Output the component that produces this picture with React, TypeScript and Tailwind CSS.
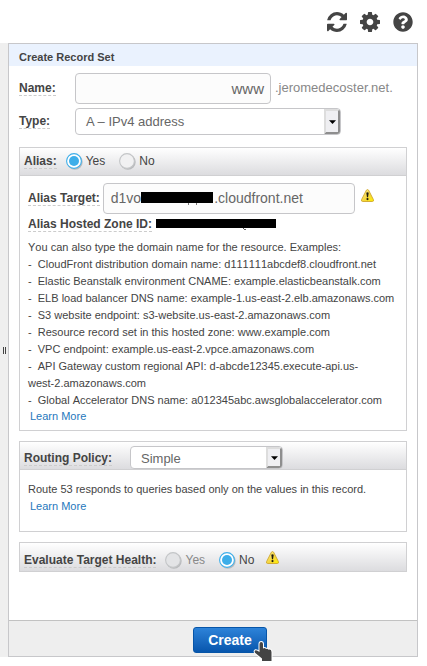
import type { ReactNode } from "react";
import { FaQuestionCircle } from "react-icons/fa";

const examples: ReactNode[] = [
  "CloudFront distribution domain name: d111111abcdef8.cloudfront.net",
  "Elastic Beanstalk environment CNAME: example.elasticbeanstalk.com",
  "ELB load balancer DNS name: example-1.us-east-2.elb.amazonaws.com",
  "S3 website endpoint: s3-website.us-east-2.amazonaws.com",
  "Resource record set in this hosted zone: www.example.com",
  "VPC endpoint: example.us-east-2.vpce.amazonaws.com",
  <>API Gateway custom regional API: d-abcde12345.execute-api.us-<br />west-2.amazonaws.com</>,
  "Global Accelerator DNS name: a012345abc.awsglobalaccelerator.com",
];

function Label({ children }: { children: ReactNode }) {
  return (
    <span className="h-[15px] shrink-0 border-b border-dashed border-[#ccc] text-xs leading-[14px] font-bold whitespace-nowrap text-[#444]">
      {children}
    </span>
  );
}

function RefreshIcon() {
  return (
    <svg width="20" height="20" viewBox="0 0 1536 1536" fill="currentColor">
      <path transform="matrix(1 0 0 -1 0 1536)" d="M1511 608q0-5-1-7q-64-268-268-434.500t-478-166.500q-146 0-282.500 55t-243.500 157l-129-129q-19-19-45-19t-45 19t-19 45v448q0 26 19 45t45 19h448q26 0 45-19t19-45t-19-45l-137-137q71-66 161-102t187-36q134 0 250 65t186 179q11 17 53 117q8 23 30 23h192q13 0 22.500-9.500t9.500-22.500zM1536 1408v-448q0-26-19-45t-45-19h-448q-26 0-45 19t-19 45t19 45l138 138q-148 137-349 137q-134 0-250-65t-186-179q-11-17-53-117q-8-23-30-23h-199q-13 0-22.500 9.500t-9.500 22.500v7q65 268 270 434.500t480 166.500q146 0 284-55.500t245-156.500l130 129q19 19 45 19t45-19t19-45z" />
    </svg>
  );
}

function GearIcon() {
  return (
    <svg width="20" height="20" viewBox="0 0 1536 1536" fill="currentColor" fillRule="evenodd">
      <path d="M1024 768q0 106-75 181t-181 75t-181-75t-75-181t75-181t181-75t181 75t75 181zM1536 659v222q0 12-8 23t-20 13l-185 28q-19 54-39 91q35 50 107 138q10 12 10 25t-9 23q-27 37-99 108t-94 71q-12 0-26-9l-138-108q-44 23-91 38q-16 136-29 186q-7 28-36 28h-222q-14 0-24.500-8.500t-11.500-21.500l-28-184q-49-16-90-37l-141 107q-10 9-25 9q-14 0-25-11q-126-114-165-168q-7-10-7-23q0-12 8-23q15-21 51-66.500t54-70.500q-27-50-41-99l-183-27q-13-2-21-12.500t-8-23.500v-222q0-12 8-23t19-13l186-28q14-46 39-92q-40-57-107-138q-10-12-10-24q0-10 9-23q26-36 98.500-107.500t94.500-71.500q13 0 26 10l138 107q44-23 91-38q16-136 29-186q7-28 36-28h222q14 0 24.500 8.500t11.500 21.500l28 184q49 16 90 37l142-107q9-9 24-9q13 0 25 10q129 119 165 170q7 8 7 22q0 12-8 23q-15 21-51 66.500t-54 70.500q26 50 41 98l183 28q13 2 21 12.500t8 23.500z" />
    </svg>
  );
}

function Warning() {
  return (
    <svg width="13" height="13" viewBox="0 0 13 13" className="shrink-0">
      <defs>
        <linearGradient id="warn" x1="0" y1="0" x2="1" y2="1">
          <stop offset="0" stopColor="#fff3a0" />
          <stop offset="0.55" stopColor="#f5d63d" />
          <stop offset="1" stopColor="#fff200" />
        </linearGradient>
      </defs>
      <path d="M5.4 1.2Q6.5 -.3 7.6 1.2L12.4 10.6Q13 12.5 11.3 12.5H1.7Q0 12.5 .6 10.6Z" fill="url(#warn)" stroke="#cfa62c" strokeWidth=".9" />
      <path d="M5.3 3.7Q6.5 2.7 7.7 3.7L7 8.2H6Z" fill="#1c1a10" />
      <circle cx="6.5" cy="10.1" r="1.1" fill="#1c1a10" />
    </svg>
  );
}

function Radio({ checked, disabled }: { checked?: boolean; disabled?: boolean }) {
  return (
    <svg width="17" height="17" viewBox="0 0 17 17" className="shrink-0">
      <circle cx="8.9" cy="9" r="7.8" fill="#b9bbbd" />
      <circle cx="8" cy="8" r="7.4" fill={checked ? "#fff" : disabled ? "#e3e4e6" : "#f1f1f2"} stroke={checked ? "#3daee9" : "#c3c5c7"} strokeWidth="1.1" />
      {checked && <circle cx="8" cy="8" r="5" fill="#3daee9" />}
    </svg>
  );
}

function Select({ className, value }: { className: string; value: string }) {
  return (
    <div className={`flex shrink-0 rounded-[4px] border border-[#c6c6c9] bg-white text-[13px] text-[#666] ${className}`}>
      <span className="flex-1 pl-[10px]">{value}</span>
      <span className="flex w-4 items-center justify-center rounded-r-[3px] border-2 border-t-[#ddd] border-r-[#8e8e8e] border-b-[#8e8e8e] border-l-[#ddd] bg-[#efeff2]">
        <svg width="7" height="4" viewBox="0 0 7 4" className="shrink-0">
          <path d="M0 .3H7L3.5 3.9Z" fill="#000" />
        </svg>
      </span>
    </div>
  );
}

const bar = "flex bg-linear-to-b from-white to-[#dcdcdf]";
const box = "mx-[10px] border border-[#d0d0d2]";
const link = "ml-[2px] block text-[#1f78bd]";

export default function App() {
  return (
    <div className="h-[666px] w-[427px] overflow-hidden bg-white font-['Liberation_Sans',Arial,sans-serif] text-[11px] text-[#444]">
      <header className="flex h-[43px] justify-end gap-[13px] pt-3 pr-[14px] text-[20px] text-[#444]">
        <RefreshIcon />
        <GearIcon />
        <FaQuestionCircle />
      </header>
      <div className="flex h-[614px]">
        <aside className="flex w-2 items-center justify-end gap-px bg-[#efefef] pr-[2px]">
          <i className="h-[7px] w-px bg-[#444]" />
          <i className="h-[7px] w-px bg-[#444]" />
        </aside>
        <main className="flex w-[410px] flex-col border border-[#c7c7ca]">
          <h1 className="h-[22px] shrink-0 bg-[#eaf2fe] pl-[10px] text-[11px] leading-[26px] font-bold text-[#444]">Create Record Set</h1>
          <div className="flex h-[38px] pt-[7px] pl-[10px]">
            <div className="w-14 pt-2"><div className="flex"><Label>Name:</Label></div></div>
            <div className="h-[31px] w-[196px] rounded-[4px] border border-[#c6c6c9] bg-[#fcfcfc] pr-[6px] text-right text-[15px] leading-[29px] text-[#666]">www</div>
            <span className="ml-1 text-[13px] leading-[29px] text-[#888]">.jeromedecoster.net.</span>
          </div>
          <div className="flex h-[43px] pt-1 pl-[10px]">
            <div className="w-14 pt-[6px]"><div className="flex"><Label>Type:</Label></div></div>
            <Select className="h-[27px] w-[266px] leading-[26px]" value="A – IPv4 address" />
          </div>

          <section className={`${box} h-[284px] shrink-0`}>
            <div className={`${bar} h-7 border-b border-[#d0d0d2] pt-[5px] pl-1`}>
              <div className="flex pt-[1px]"><Label>Alias:</Label></div>
              <div className="ml-[9px] flex gap-[3px] text-xs leading-[17px]"><Radio checked />Yes</div>
              <div className="ml-[14px] flex gap-[3px] text-xs leading-[17px]"><Radio />No</div>
            </div>
            <div className="flex pt-[7px] pl-2">
              <div className="flex pt-2"><Label>Alias Target:</Label></div>
              <div className="ml-[3px] flex h-[31px] w-[252px] items-center rounded-[4px] border border-[#c6c6c9] bg-[#fcfcfc] pl-[7px] text-sm leading-[29px] text-[#666]">
                d1vo
                <span className="relative -top-px mr-px h-[11px] w-[72px] bg-black">
                  <i className="absolute top-[11px] left-[47px] h-[2px] w-px bg-[#777]" />
                  <i className="absolute top-[11px] left-[55px] h-[2px] w-px bg-[#777]" />
                </span>
                .cloudfront.net
              </div>
              <div className="pt-[6px] pl-[6px]"><Warning /></div>
            </div>
            <div className="flex pt-[3px] pl-2">
              <Label>Alias Hosted Zone ID:</Label>
              <span className="relative mt-[2px] ml-1 h-[9px] w-[120px] bg-black">
                <i className="absolute top-[9px] left-[87px] h-px w-px bg-[#555]" />
                <i className="absolute top-[10px] left-[88px] h-px w-[2px] bg-[#666]" />
              </span>
            </div>
            <div className="pt-[7px] pr-2 pl-2 leading-[17px] [font-kerning:none]">
              <p>You can also type the domain name for the resource. Examples:</p>
              {examples.map((example, i) => (
                <p key={i}>-&nbsp; {example}</p>
              ))}
              <a className={`${link} -mt-px`}>Learn More</a>
            </div>
          </section>

          <section className={`${box} mt-[10px] h-[91px] shrink-0`}>
            <div className={`${bar} h-7 border-b border-[#d0d0d2] pt-1 pl-1`}>
              <div className="flex pt-[5px]"><Label>Routing Policy:</Label></div>
              <Select className="ml-[18px] h-[23px] w-[153px] leading-[23px]" value="Simple" />
            </div>
            <div className="pt-[11px] pl-2 leading-[17px]">
              <p>Route 53 responds to queries based only on the values in this record.</p>
              <a className={link}>Learn More</a>
            </div>
          </section>

          <section className={`${box} ${bar} mt-[10px] h-[30px] shrink-0 pt-[9px] pl-1`}>
            <div className="flex pt-[1px]"><Label>Evaluate Target Health:</Label></div>
            <div className="ml-[9px] flex gap-[3px] text-xs leading-[17px] text-[#888]"><Radio disabled />Yes</div>
            <div className="ml-[14px] flex gap-[3px] text-xs leading-[17px]"><Radio checked />No</div>
            <div className="-mt-px ml-3"><Warning /></div>
          </section>

          <footer className="mt-auto flex h-9 shrink-0 justify-center border-t border-[#c2c2c2] bg-[#eee] pt-[6px]">
            <div className="relative ml-[34px] h-[26px] w-[74px] rounded-[3px] border border-[#0755a8] bg-linear-to-b from-[#2d83d9] to-[#0756ad] text-center text-sm leading-[24px] font-bold text-white">
              Create
              <svg className="absolute top-[11px] left-[58px]" width="24" height="26" viewBox="0 0 24 26">
                <path d="M7.500 5Q7.500 3 9.200 3T11 5V9.500Q12.800 8.500 14 10Q15.500 9.200 16.500 10.700Q19.500 10.200 19.500 13V22H10V19.500L3 13.700Q2 12 3.600 11.200Q5 11 7.500 13Z" fill="#444" stroke="#fff" strokeWidth="2" strokeLinejoin="round" paintOrder="stroke" />
              </svg>
            </div>
          </footer>
        </main>
      </div>
    </div>
  );
}
